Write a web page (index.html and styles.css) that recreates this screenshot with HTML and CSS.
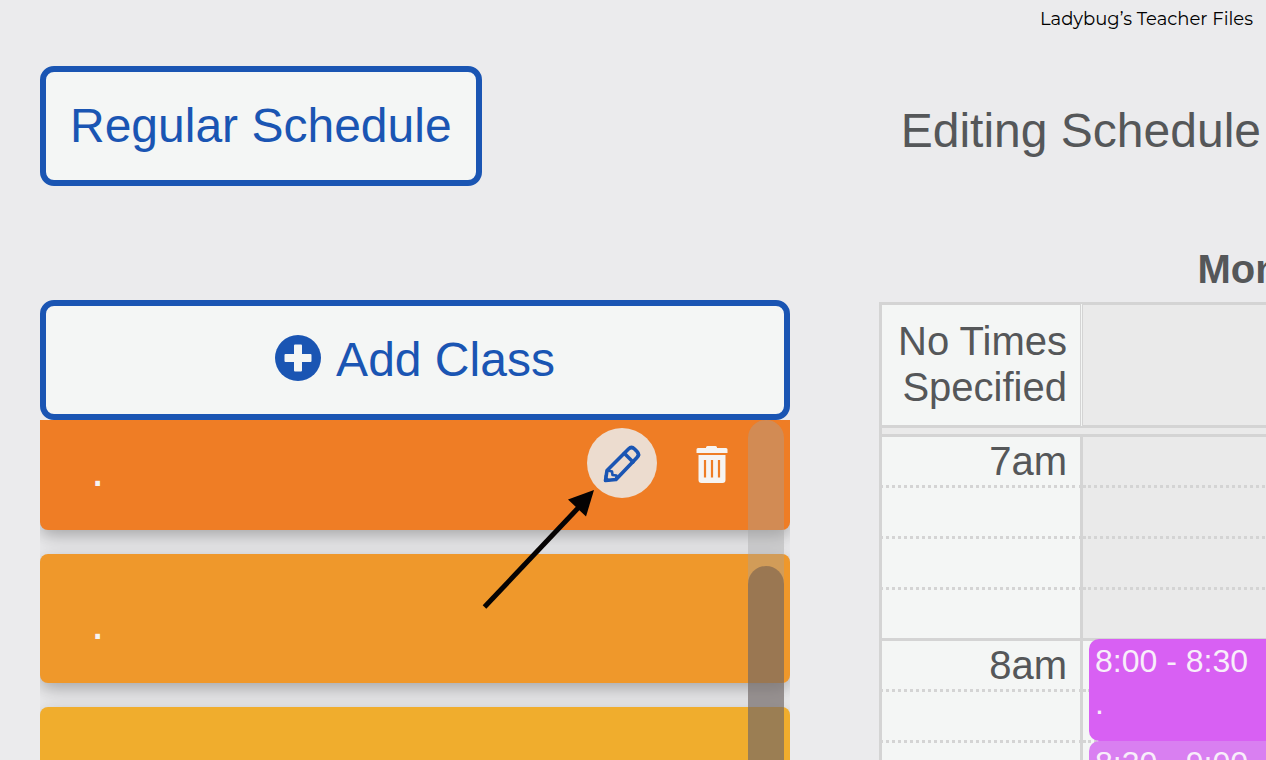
FILE: index.html
```
<!DOCTYPE html>
<html lang="en">
<head>
    <meta charset="UTF-8">
    <meta name="viewport" content="width=device-width, initial-scale=1.0">
    <title>Editing Schedule</title>
    <link rel="stylesheet" href="styles.css">
</head>
<body>
    <header class="credit">Ladybug’s Teacher Files</header>

    <main class="page">
        <!-- Class list -->
        <section class="sidebar">
            <button class="btn btn-schedule" type="button">Regular Schedule</button>

            <button class="btn btn-add" type="button">
                <svg class="icon-plus" viewBox="0 0 46 46" aria-hidden="true">
                    <circle cx="23" cy="23" r="23" fill="#1a55b3"/>
                    <path d="M19 10.500a1 1 0 0 1 1-1h6a1 1 0 0 1 1 1V19h8.500a1 1 0 0 1 1 1v6a1 1 0 0 1-1 1H27v8.500a1 1 0 0 1-1 1h-6a1 1 0 0 1-1-1V27h-8.500a1 1 0 0 1-1-1v-6a1 1 0 0 1 1-1H19z" fill="#f4f6f5"/>
                </svg>
                Add Class
            </button>

            <div class="class-area">
                <div class="class-list">
                    <article class="class-card orange">
                        <span class="class-name">.</span>
                        <div class="actions">
                            <button class="action edit" type="button" aria-label="Edit class">
                                <svg viewBox="0 0 70 70" aria-hidden="true">
                                    <g fill="none" stroke="#1a55b3" stroke-width="3.600" stroke-linejoin="round" stroke-linecap="round">
                                        <path d="M18.500 52.500 20 42.500 41.500 21Q44.500 18 47.500 21L50 23.500Q53 26.500 50 29.500L29 51.500Z"/>
                                        <path d="M21 42.500 25 43.500 25.500 47 29.500 47.500 29 51.500" stroke-width="2.600"/>
                                        <path d="M37.500 25.500 46 34"/>
                                    </g>
                                    <path d="M17.500 54V47l6.500 6z" fill="#1a55b3"/>
                                </svg>
                            </button>
                            <button class="action" type="button" aria-label="Delete class">
                                <svg viewBox="0 0 70 70" aria-hidden="true">
                                    <g fill="#f6f4f2">
                                        <path d="M29 20v-.500a1.500 1.500 0 0 1 1.500-1.500h8a1.500 1.500 0 0 1 1.500 1.500V20h9a1.500 1.500 0 0 1 1.500 1.500V25h-31v-3.500A1.500 1.500 0 0 1 21 20z"/>
                                        <path d="M21.500 27h27v25a3 3 0 0 1-3 3h-21a3 3 0 0 1-3-3z"/>
                                    </g>
                                    <path d="M28 32v17.500M35 32v17.500M42 32v17.500" stroke="#ef7d25" stroke-width="2.200"/>
                                </svg>
                            </button>
                        </div>
                    </article>
                    <article class="class-card amber">
                        <span class="class-name">.</span>
                    </article>
                    <article class="class-card yellow"></article>
                </div>

                <div class="scroll-track">
                    <div class="scroll-thumb"></div>
                </div>

                <svg class="pointer" viewBox="0 0 114 122" aria-hidden="true">
                    <path d="M2.500 119 98 18" stroke="#050303" stroke-width="5" fill="none"/>
                    <path d="M112 2 86 11.500 104 28.500z" fill="#050303"/>
                </svg>
            </div>
        </section>

        <!-- Calendar -->
        <section class="schedule">
            <h1>Editing Schedule</h1>
            <table class="calendar">
                <colgroup>
                    <col class="col-time">
                    <col class="col-day">
                </colgroup>
                <thead>
                    <tr>
                        <td></td>
                        <th class="day" scope="col">Monday</th>
                    </tr>
                </thead>
                <tbody>
                    <tr class="all-day">
                        <th class="time" scope="row">No Times Specified</th>
                        <td></td>
                    </tr>
                    <tr class="divider">
                        <td colspan="2"></td>
                    </tr>
                    <tr class="slot"><th class="time" scope="row">7am</th><td></td></tr>
                    <tr class="slot"><th class="time"></th><td></td></tr>
                    <tr class="slot"><th class="time"></th><td></td></tr>
                    <tr class="slot hour-end"><th class="time"></th><td></td></tr>
                    <tr class="slot open">
                        <th class="time" scope="row">8am</th>
                        <td class="has-events">
                            <div class="events">
                                <div class="event">8:00 - 8:30<br>.</div>
                                <div class="event light">8:30 - 9:00</div>
                            </div>
                        </td>
                    </tr>
                    <tr class="slot open"><th class="time"></th><td></td></tr>
                    <tr class="slot open"><th class="time"></th><td></td></tr>
                </tbody>
            </table>
        </section>
    </main>
</body>
</html>
```
FILE: styles.css
```
* {
    margin: 0;
    padding: 0;
    box-sizing: border-box;
}

body {
    display: flex;
    flex-direction: column;
    height: 100vh;
    overflow: hidden;
    font-family: "Liberation Sans", Arial, sans-serif;
    background-color: #ebebed;
    color: #555759;
}

button {
    font-family: inherit;
    cursor: pointer;
}

.credit {
    padding-top: 2px;
    padding-right: 13px;
    font-family: Montserrat, Inter, sans-serif;
    font-size: 18px;
    line-height: 34px;
    text-align: right;
    color: #000;
}

.page {
    display: grid;
    grid-template-columns: minmax(0, 750fr) minmax(0, 387fr);
    grid-template-rows: minmax(0, 1fr);
    column-gap: 89px;
    flex: 1;
    min-height: 0;
    padding-left: 40px;
}

/* Class list */
.sidebar {
    display: flex;
    flex-direction: column;
    padding-top: 30px;
}

.btn {
    flex: none;
    height: 120px;
    padding: 0 24px 2px;
    border: 6px solid #1a55b3;
    border-radius: 14px;
    background-color: #f4f6f5;
    color: #1a55b3;
    font-size: 48px;
}

.btn-schedule {
    align-self: flex-start;
    margin-bottom: 114px;
}

.btn-add {
    display: flex;
    align-items: center;
    justify-content: center;
    gap: 15px;
}

.icon-plus {
    width: 46px;
    height: 46px;
    margin-bottom: 2px;
}

.class-area {
    position: relative;
    flex: 1;
    min-height: 0;
    overflow: hidden;
}

/* scrolled down a little, so the first card is cut off */
.class-list {
    display: flex;
    flex-direction: column;
    gap: 24px;
    margin-top: -19px;
}

.class-card {
    display: flex;
    justify-content: space-between;
    align-items: flex-end;
    flex: none;
    height: 129px;
    padding: 0 43px 36px 51px;
    border-radius: 8px;
    box-shadow: 0 6px 18px rgba(0, 0, 0, 0.3);
    color: #f6f4f2;
}

.orange {
    background-color: #ef7d25;
}

.amber {
    background-color: #ef982b;
}

.yellow {
    background-color: #f0ad2d;
}

.class-name {
    font-size: 48px;
    line-height: 48px;
}

.actions {
    display: flex;
    align-self: flex-start;
    gap: 20px;
    padding-top: 27px;
}

.action {
    width: 70px;
    height: 70px;
    border: none;
    border-radius: 50%;
    background: none;
}

.action svg {
    display: block;
    width: 100%;
    height: 100%;
}

.edit {
    background-color: #ecdccf;
}

.scroll-track {
    position: absolute;
    top: 0;
    right: 6px;
    bottom: 0;
    width: 36px;
    padding-top: 146px;
    border-radius: 18px 18px 0 0;
    background-color: rgba(164, 164, 164, 0.38);
}

.scroll-thumb {
    height: 100%;
    border-radius: 18px 18px 0 0;
    background-color: rgba(92, 78, 76, 0.47);
}

.pointer {
    position: absolute;
    top: 68px;
    right: 194px;
    width: 114px;
    height: 122px;
}

/* Calendar */
.schedule {
    padding-top: 67px;
    overflow: hidden;
}

.schedule h1 {
    margin-bottom: 77px;
    padding-right: 5px;
    font-size: 48px;
    font-weight: normal;
    line-height: 56px;
    text-align: right;
    white-space: nowrap;
}

.calendar {
    width: 584px;
    table-layout: fixed;
    border-collapse: separate;
    border-spacing: 0;
    font-size: 40px;
}

.col-time {
    width: 204px;
}

.day {
    height: 66px;
    font-weight: bold;
}

.calendar tbody td {
    background-color: #eaeaea;
}

.time {
    padding-right: 13px;
    border-left: 3px solid #d4d4d4;
    border-right: 3px solid #d4d4d4;
    background-color: #f4f6f5;
    font-weight: normal;
    line-height: 46px;
    text-align: right;
}

.all-day th,
.all-day td {
    height: 126px;
    border-top: 3px solid #d4d4d4;
    border-bottom: 3px solid #d4d4d4;
}

.all-day .time {
    padding-bottom: 2px;
    border-right-style: double;
}

.divider td {
    height: 9px;
    border-left: 3px solid #d4d4d4;
    border-bottom: 3px solid #d4d4d4;
}

.slot th,
.slot td {
    height: 51px;
    border-bottom: 3px dotted #d4d4d4;
}

.hour-end th,
.hour-end td {
    border-bottom-style: solid;
}

.calendar .open td {
    background-color: #f4f6f5;
}

.has-events {
    position: relative;
}

/* events lie over the time slots */
.events {
    position: absolute;
    top: -2px;
    left: 6px;
    right: 6px;
}

.event {
    height: 102px;
    padding: 1px 6px;
    border-radius: 10px;
    background-color: #d860f3;
    color: #f8eefa;
    font-size: 32px;
    line-height: 42px;
}

.event.light {
    background-color: #d97ff1;
}
```
